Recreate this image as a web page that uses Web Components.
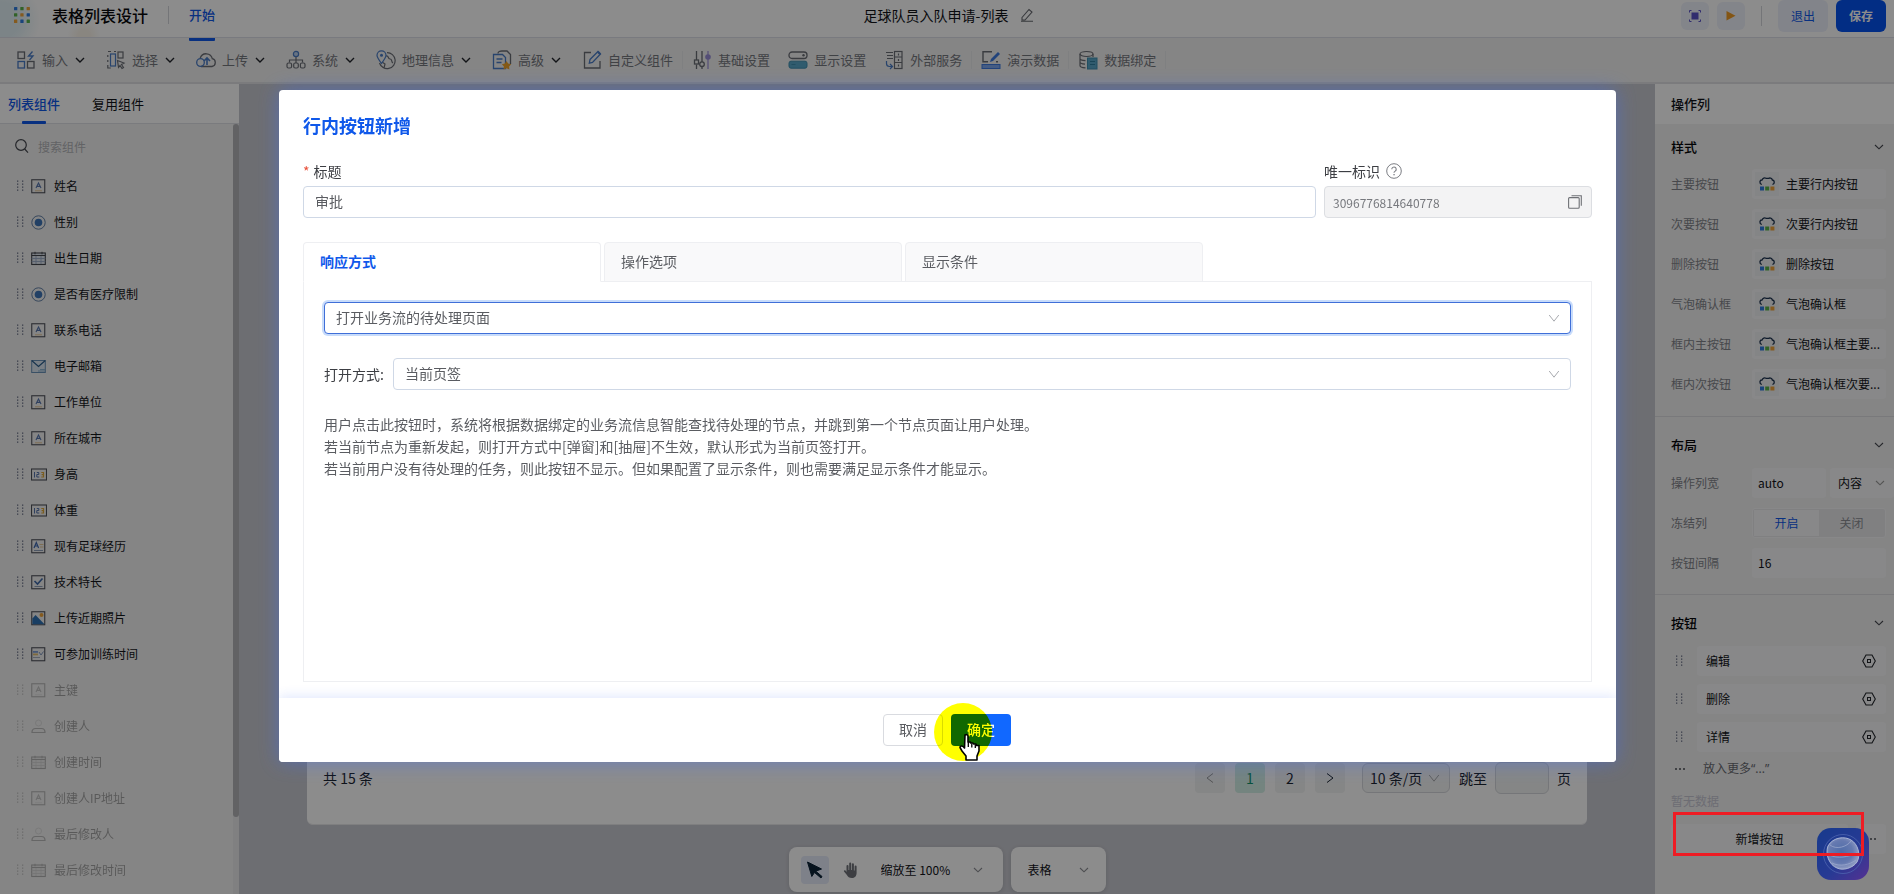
<!DOCTYPE html>
<html lang="zh-CN">
<head>
<meta charset="utf-8">
<meta name="viewport" content="width=device-width, initial-scale=1">
<title>表格列表设计</title>
<style>
  html, body { margin: 0; height: 100%; }
  body {
    font-family: "Noto Sans CJK SC", "Noto Sans", sans-serif;
    font-size: 12px; line-height: 20px; color: #111318; background: #c7c8cf; overflow: hidden;
    --blue: #0f58ea;
    --panel: #f2f2f2;
  }
</style>
</head>
<body>
<designer-app></designer-app>

<script>
/* ---------- shared ---------- */
const RESET = `
  *, *::before, *::after { box-sizing: border-box; }
  button, input, select { font: inherit; color: inherit; margin: 0; border: 0; padding: 0; background: none; outline: none; border-radius: 0; }
  select { appearance: none; }
  ul, h1, h2, h3, p { margin: 0; padding: 0; list-style: none; font: inherit; }
  a { color: inherit; text-decoration: none; }
`;
function define(name, css, html, setup) {
  customElements.define(name, class extends HTMLElement {
    connectedCallback() {
      if (this.shadowRoot) return;
      const root = this.attachShadow({ mode: 'open' });
      const t = document.createElement('template');
      t.innerHTML = `<style>${RESET}${css}</style>` + (typeof html === 'function' ? html(this) : html);
      root.append(t.content.cloneNode(true));
      if (setup) setup(this, root);
    }
  });
}

/* ---------- icons: [viewBox size w, h, markup] ---------- */
const K = '#6b6e76', B = '#4a7cc6', LB = '#58a6c8';
const boxed = inner => `<rect x=".75" y=".75" width="13" height="13" fill="none" stroke="#4f525a" stroke-width="1.1"/>${inner}`;
const ICONS = {
  chevron: [10, 10, `<path d="M1 3 5 6.800 9 3" fill="none" stroke="currentColor" stroke-width="1.100"/>`],
  chevronBold: [10, 10, `<path d="M1 3 5 7 9 3" fill="none" stroke="currentColor" stroke-width="1.400"/>`],
  chevronThin: [12, 12, `<path d="M1.2 3 6 9.2 10.8 3" fill="none" stroke="currentColor" stroke-width="1"/>`],
  left: [10, 12, `<path d="M8 1.5 2 6l6 4.500" fill="none" stroke="currentColor"/>`],
  right: [10, 12, `<path d="M2 1.500 8 6l-6 4.500" fill="none" stroke="currentColor"/>`],
  apps: [16, 16, [['#2f7de0','#59b34a','#f0a43a'],['#59b34a','#f0a43a','#2f7de0'],['#f0a43a','#2f7de0','#59b34a']].map((r, y) => r.map((c, x) => `<rect x="${x * 6.3}" y="${y * 6.3}" width="3.300" height="3.300" rx=".5" fill="${c}"/>`).join('')).join('')],
  pen: [14, 14, `<path d="M2 9.500 9 1.500l3 2.500-7 8H2z M1 13.200h12" fill="none" stroke="#666970" stroke-width="1.100"/>`],
  scan: [14, 14, `<g fill="#5a53c8"><rect x="3.500" y="3.500" width="7" height="7"/></g><path d="M1.500 3.500v-2h2M10.500 1.500h2v2M12.500 10.500v2h-2M3.500 12.500h-2v-2" fill="none" stroke="#5a53c8"/>`],
  play: [12, 12, `<path d="M1.500 1 10.500 5.700 1.500 10.500z" fill="#ee9b25"/>`],
  search: [14, 14, `<circle cx="6" cy="6" r="5.300" fill="none" stroke="#44474e" stroke-width="1.200"/><path d="M9.700 10 13 13.600" stroke="#44474e" stroke-width="1.200"/>`],
  input: [20, 20, `<g fill="none" stroke-width="1.300"><rect x="2" y="2" width="6.500" height="6.500" stroke="${K}"/><rect x="2" y="11.500" width="6.500" height="6.500" stroke="${B}"/><rect x="11.500" y="11.500" width="6.500" height="6.500" stroke="${K}"/><path d="M16.500 1.500 12.500 6h4.500l-3.500 4" stroke="${B}"/></g>`],
  choose: [20, 20, `<g fill="none" stroke="${K}" stroke-width="1.200"><path d="M2 1.500h3M1.800 5v2M1.800 10v2M1.800 15v3h3M8 1.500h2"/><rect x="4.500" y="4" width="5" height="12" stroke="${B}"/><rect x="12" y="2" width="5" height="6"/><path d="M11.500 10.500 18 13l-2.500 1.500 2 3-1.500 1-2-3-1.500 1.800z"/></g>`],
  upload: [20, 20, `<g fill="none" stroke-width="1.300"><path d="M5 16.500h11a4 4 0 0 0 .3-7.800A6.300 6.300 0 0 0 4.200 8" stroke="${K}"/><circle cx="4.500" cy="12.500" r="3.800" stroke="${B}"/><path d="M11 15V8.500M8 11l3-3 3 3" stroke="${B}" stroke-width="1.600"/></g>`],
  system: [20, 20, `<g fill="none" stroke="${K}" stroke-width="1.200"><circle cx="10" cy="4" r="2.600" stroke="${B}" fill="#bcd2ee"/><path d="M10 7v6M3.500 12.500V10h13v2.500"/><rect x="1" y="13" width="4.600" height="5" rx="1.500"/><rect x="7.700" y="13" width="4.600" height="5" rx="1.500"/><rect x="14.400" y="13" width="4.600" height="5" rx="1.500"/></g>`],
  geo: [20, 20, `<g fill="none" stroke="${K}" stroke-width="1.200"><path d="M11 2.600A8 8 0 1 1 3.500 13M10 6c3-1 1.500 3 4 3s1 3 3 4M6 12l3 2-1 4"/><path d="M5.500 13.500C2.500 9.500 1 7.500 1 5.300a4.500 4.500 0 0 1 9 0c0 2.200-1.500 4.200-4.500 8.200z" stroke="${B}"/><circle cx="5.500" cy="5.300" r="1.500" fill="${B}" stroke="none"/></g>`],
  advanced: [20, 20, `<g fill="none" stroke-width="1.300"><path d="M6 3.500C6 1.500 8 1 10 1h5l3.500 3.500V14" stroke="${K}"/><path d="M1.500 4.500h9l3 3v11h-12zM4.500 9h6M4.500 12.500h5" stroke="${B}"/></g><path d="m14.500 11 1.600 2.600 3 .6-2 2.200.3 3-2.900-1.200-2.900 1.200.3-3-2-2.200 3-.6z" fill="#f0a228"/>`],
  custom: [20, 20, `<g fill="none" stroke-width="1.300"><path d="M9 2.500H2.500V18H18v-7" stroke="${K}"/><path d="m8 9.500 8-8 2.500 2.500-8 8.500-3.200.7z" stroke="${B}"/><path d="m15 2.500 1.500-1.500L19 3.500 17.500 5z" fill="${B}"/></g>`],
  basic: [20, 20, `<g fill="none" stroke="${K}" stroke-width="1.300"><path d="M4.500 1v9M4.500 14.500V19M10 1v11M10 16.500V19"/><rect x="2.500" y="10" width="4" height="4"/><circle cx="10" cy="14.200" r="2.300"/></g><path d="M16 1v18" stroke="#9a8fd8" stroke-width="1.200"/><circle cx="16" cy="7" r="2.800" fill="#9a8fd8"/>`],
  display: [20, 20, `<rect x="1" y="2" width="18" height="6.500" rx="3" fill="none" stroke="${K}" stroke-width="1.300"/><circle cx="15.500" cy="5.200" r="1.200" fill="${K}"/><rect x="1" y="11.200" width="18" height="7" rx="2" fill="${LB}" stroke="#3f8fb0"/><path d="M3.500 14.500h4" stroke="#3f8fb0"/>`],
  service: [20, 20, `<g fill="none" stroke="${K}" stroke-width="1.200"><rect x="10.500" y="1.500" width="7.500" height="17"/><path d="M10.500 7h7.500M10.500 12.500h7.500M14.500 3.500v2M14.500 9v2M14.500 14.500v2M2 2.500h7M3 5.500h6M3 8.500h6"/><path d="M2.500 11v2.500a3 3 0 0 0 3 3H8M6 14l2.500 2.500L6 19" stroke="${B}"/></g>`],
  demo: [20, 20, `<g fill="none" stroke="${K}" stroke-width="1.400"><path d="M11 1.800H2v10h5M15 11.800h2"/></g><path d="m9 12 1-3 7-7 2 2-7 7z" fill="#3f7be0"/><rect x="1" y="14.500" width="18" height="4" fill="#7fa8ee" stroke="#3f7be0"/>`],
  bind: [20, 20, `<g fill="none" stroke="${K}" stroke-width="1.200"><ellipse cx="8.500" cy="4" rx="6.500" ry="2.500"/><path d="M2 4v11.500c0 1.200 2.500 2.200 5.500 2.400M2 8.500c0 1 2.500 2 5.500 2.200M2 12c0 1 2 1.900 5 2.100M15 4v3"/></g><rect x="9.500" y="8" width="9.500" height="11" fill="${LB}" stroke="#3f8fb0"/><path d="M12 11.500h5M12 14.500h5" stroke="#2f7f9f"/>`],
  grip: [8, 12, [0, 1].map(x => [0, 1, 2, 3].map(y => `<rect x="${x * 5 + 1}" y="${y * 3 + .5}" width="1.300" height="1.300" fill="#6a7088"/>`).join('')).join('')],
  text: [15, 15, boxed(`<path d="M5 9 7.500 4 10 9M5.900 7.400h3.200" fill="none" stroke="#5675ad" stroke-width="1.100"/><path d="M4 11.800h7" stroke="#e5c898"/>`)],
  radio: [15, 15, `<circle cx="7.500" cy="7.500" r="6.700" fill="none" stroke="#6482a8" stroke-width="1"/><circle cx="7.500" cy="7.500" r="3.800" fill="#3f76b8"/>`],
  date: [15, 15, `<rect x=".7" y="2" width="13.600" height="11.500" fill="#dfe5ee" stroke="#44474e" stroke-width="1.100"/><path d="M.7 7.500h13.600M.7 10.500h13.600M5 5v8M10 5v8" stroke="#9aaac4" stroke-width=".9"/><path d="M.7 4.500h13.600M4 .8v2.500M11 .8v2.500" stroke="#44474e"/>`],
  mail: [15, 15, `<rect x=".7" y="1.500" width="13.600" height="12" fill="#dce8f2" stroke="#6a92b8" stroke-width="1"/><path d="M.7 1.500 7.500 7.500 14.300 1.500" fill="none" stroke="#2d5f8e" stroke-width="1.200"/><path d="M9 10.500h5M7 12h7" stroke="#8fb4d2"/>`],
  number: [16, 15, `<rect x=".5" y="2" width="15" height="11" fill="none" stroke="#4f525a" stroke-width="1.100"/><path d="M3.500 5v5.500M5.800 5.500h2v2h-2v2.500h2.500" fill="none" stroke="#5675ad"/><path d="M10.300 5.500h2.200v4.500h-2.200M10.600 7.700h2" fill="none" stroke="#e0a93a" stroke-width="1.200"/>`],
  area: [15, 15, boxed(`<path d="M3 9 5.300 3.500 7.600 9M3.800 7h3" fill="none" stroke="#3f69b0" stroke-width="1.200"/><path d="M8.500 5.500h4M9 8h3.500" stroke="#e5c898"/><path d="M3 11.500h9" stroke="#8f9fb8"/>`)],
  check: [15, 15, boxed(`<path d="m3.500 6 3 3 5-5.500" fill="none" stroke="#3f69a8" stroke-width="1.600"/><path d="M3.500 11.500h8" stroke="#8f9fb8"/>`)],
  image: [15, 15, boxed(`<path d="M1.400 13.200V7.500L4.500 4l9 9.200z" fill="#2f72b4"/><circle cx="10.500" cy="4" r="2" fill="#f0a43a"/>`)],
  pick: [15, 15, boxed(`<rect x="2" y="4" width="5" height="1.800" fill="#7f9fd8"/><rect x="2" y="6.500" width="5" height="1.800" fill="#e5c070"/><path d="m8 5 2 3 2.500-3.500" fill="none" stroke="#7f97bd"/><path d="M2 10.500h7" stroke="#a8b0bc"/>`)],
  user: [15, 15, `<circle cx="7.500" cy="4" r="3" fill="none" stroke="#b8babe"/><path d="M1 13.500c0-2.500 1.500-4 3.500-4h6c2 0 3.500 1.500 3.500 4z" fill="none" stroke="#55585e" stroke-width="1.200"/>`],
  theme: [18, 16, `<path d="M3.800 8.500C1 7.500 1.500 4 4 4 5 2 6.500 1.500 8 2.300h2.500C12.500 1.500 14 2.500 14.300 4 16.800 4.200 17 7.500 14.500 8.500" fill="none" stroke="#1d3350" stroke-width="1.300"/><rect x="2" y="10.500" width="4" height="4" fill="#2f7de0"/><rect x="7.200" y="10.500" width="4" height="4" fill="#59b34a"/><rect x="12.400" y="10.500" width="4" height="4" fill="#f0a43a"/>`],
  hex: [14, 14, `<path d="M4 1h6l3.300 6L10 13H4L.7 7z" fill="none" stroke="#22252b" stroke-width="1.100"/><rect x="5.500" y="5.500" width="3" height="3" fill="none" stroke="#22252b"/>`],
  pointer: [18, 18, `<path d="M1.500 1 15.500 8 9.800 10.200 16 15.500 15 17 8.500 11.500 5.800 15.500z" fill="#0d2438" stroke="#0d2438"/>`],
  hand: [16, 18, `<path d="M3.500 11V5a1 1 0 0 1 2 0v4h.7V2.500a1 1 0 0 1 2 0V9h.7V3.200a1 1 0 0 1 2 0V9.500h.7V5.500a1 1 0 0 1 2 0V12c0 3-2 5-4.700 5s-4-1-5-3L1 10.500c-.5-1 .8-1.800 1.500-1z" fill="#6f7279"/>`],
  help: [16, 16, `<circle cx="8" cy="8" r="7.300" fill="none" stroke="#7b7d83"/><path d="M5.800 6.300a2.200 2.200 0 1 1 3.400 1.800c-.8.500-1.200.8-1.200 1.700" fill="none" stroke="#7b7d83" stroke-width="1.100"/><rect x="7.400" y="11" width="1.300" height="1.300" fill="#7b7d83"/>`],
  copy: [14, 14, `<rect x=".6" y="2.600" width="10.600" height="10.600" rx="1" fill="none" stroke="#6f7176" stroke-width="1.100"/><path d="M3.500.7h9.800v10" fill="none" stroke="#6f7176" stroke-width="1.100"/>`],
  more: [12, 12, `<path d="M1 6h2M5 6h2M9 6h2" stroke="#4c4f56" stroke-width="1.600"/>`],
  cursor: [22, 28, `<path d="M6 2c2-1 3 0 3 1.500V9h2.500v1H14l.5 1H17l.5 1.500H20V18l-2 5v4H7v-4l-4-5-2-3.500c0-2 3-2 4.500.5z" fill="#fff" stroke="#000" stroke-width="1.600" stroke-linejoin="round"/><path d="M9.300 9v5M12.800 10.500v4M16.300 11.500V15" stroke="#000" stroke-width="1.300"/>`]
};
customElements.define('ui-icon', class extends HTMLElement {
  connectedCallback() {
    if (this.shadowRoot) return;
    const [w, h, body] = ICONS[this.getAttribute('name')];
    this.attachShadow({ mode: 'open' }).innerHTML =
      `<style>:host{display:inline-flex;flex:none;width:${w}px;height:${h}px}svg{display:block}</style>
       <svg width="${w}" height="${h}" viewBox="0 0 ${w} ${h}" aria-hidden="true">${body}</svg>`;
  }
});

/* ---------- top bar ---------- */
define('top-bar', `
  :host { display: grid; grid-template-columns: 1fr auto 1fr; align-items: stretch; height: 38px; flex: none;
    background: radial-gradient(circle at 2px 20px, #e2f1f6 0 18px, transparent 38px), radial-gradient(circle at 84px 36px, #faf4ea 0 6px, transparent 16px), #fff;
    border-bottom: 1px solid #dcdfe8; }
  .side, .name { display: flex; align-items: center; padding-bottom: 11px; }
  .side { padding-left: 14px; position: relative; }
  h1 { font-size: 16px; font-weight: 500; line-height: 24px; margin-left: 22px; color: #08090c; }
  .rule { width: 1px; height: 18px; background: #d3d5da; margin: 0 20px; }
  nav { display: flex; align-self: stretch; margin-bottom: -11px; }
  nav a { display: flex; align-items: center; padding-bottom: 8px; font-size: 13px; font-weight: 500; color: var(--blue); border-bottom: 3px solid var(--blue); border-radius: 1px; }
  .name { font-size: 14px; gap: 12px; padding-left: 4px; }
  .name button { display: flex; }
  .end { justify-content: flex-end; padding: 0 8px 9px 0; }
  .end button { display: flex; align-items: center; justify-content: center; height: 28px; border-radius: 6px; background: #eff2fb; font-size: 12px; }
  .sq { width: 28px; margin-right: 8px; }
  .end .txt { width: 50px; height: 32px; color: var(--blue); background: #edf1fc; }
  .end .go { background: #0452f0; color: #fff; font-weight: 700; margin-left: 8px; }
  .end .rule { margin: 0 16px 0 8px; height: 20px; }
`, `
  <div class="side"><ui-icon name="apps"></ui-icon><h1>表格列表设计</h1><span class="rule"></span><nav><a href="#start">开始</a></nav></div>
  <div class="name"><span>足球队员入队申请-列表</span><button aria-label="重命名"><ui-icon name="pen"></ui-icon></button></div>
  <div class="side end"><button class="sq" aria-label="全屏"><ui-icon name="scan"></ui-icon></button><button class="sq" aria-label="预览"><ui-icon name="play"></ui-icon></button><span class="rule"></span><button class="txt">退出</button><button class="txt go">保存</button></div>
`);

/* ---------- tool bar ---------- */
define('tool-item', `
  :host { display: block; }
  button { display: flex; align-items: center; font-size: 13px; color: #76787f; }
  .label { margin-left: 6px; white-space: nowrap; }
  .arrow { margin-left: 7px; color: #22252b; }
`, el => `<button><ui-icon name="${el.getAttribute('icon')}"></ui-icon><span class="label"><slot></slot></span>${el.hasAttribute('menu') ? '<ui-icon class="arrow" name="chevronBold"></ui-icon>' : ''}</button>`);

define('tool-bar', `
  :host { display: flex; align-items: center; height: 46px; flex: none; padding-left: 16px; background: var(--panel); border-bottom: 2px solid #e0e1e4; }
  tool-item[menu] { margin-right: 21px; }
  tool-item:not([menu]) + tool-item { margin-left: 18px; }
  i { width: 1px; height: 18px; background: #e8e9eb; margin: 0 9px; }
`, `
  <tool-item icon="input" menu>输入</tool-item><tool-item icon="choose" menu>选择</tool-item><tool-item icon="upload" menu>上传</tool-item>
  <tool-item icon="system" menu>系统</tool-item><tool-item icon="geo" menu>地理信息</tool-item><tool-item icon="advanced" menu>高级</tool-item>
  <tool-item icon="custom">自定义组件</tool-item><i></i><tool-item icon="basic">基础设置</tool-item><tool-item icon="display">显示设置</tool-item>
  <tool-item icon="service">外部服务</tool-item><i></i><tool-item icon="demo">演示数据</tool-item><i></i><tool-item icon="bind">数据绑定</tool-item><i></i>
`);

/* ---------- component palette ---------- */
define('palette-item', `
  :host { display: flex; align-items: center; height: 36px; padding-left: 16px; color: #14161b; }
  :host([disabled]) { opacity: .36; filter: grayscale(1); }
  .type { display: flex; justify-content: center; width: 17px; margin: 0 7px 0 6px; }
`, el => `<ui-icon name="grip"></ui-icon><span class="type"><ui-icon name="${el.getAttribute('icon')}"></ui-icon></span><slot></slot>`);

const FIELDS = [['text','姓名'],['radio','性别'],['date','出生日期'],['radio','是否有医疗限制'],['text','联系电话'],['mail','电子邮箱'],['text','工作单位'],['text','所在城市'],['number','身高'],['number','体重'],['area','现有足球经历'],['check','技术特长'],['image','上传近期照片'],['pick','可参加训练时间'],['text','主键',1],['user','创建人',1],['date','创建时间',1],['text','创建人IP地址',1],['user','最后修改人',1],['date','最后修改时间',1]];
define('palette-panel', `
  :host { display: flex; flex-direction: column; width: 239px; flex: none; background: var(--panel); min-height: 0; }
  nav { display: flex; gap: 32px; height: 40px; flex: none; padding-left: 8px; background: #fff; border-bottom: 1px solid #dfe1e5; font-size: 13px; }
  nav a { display: flex; align-items: center; position: relative; }
  nav .on { color: var(--blue); font-weight: 500; }
  nav .on::after { content: ""; position: absolute; left: 14px; right: 14px; bottom: -1px; height: 3px; border-radius: 1px; background: var(--blue); }
  .body { display: flex; flex: 1; min-height: 0; overflow: hidden; }
  .list { flex: 1; min-width: 0; }
  .search { display: flex; align-items: center; gap: 9px; padding: 0 15px; height: 44px; }
  input { flex: 1; min-width: 0; height: 28px; }
  input::placeholder { color: #b2b4b8; opacity: 1; }
  .bar { width: 6px; background: #e9e9eb; }
  .bar i { display: block; height: 90%; background: #b2b3b7; border-radius: 3px; }
`, `
  <nav><a class="on" href="#list">列表组件</a><a href="#reuse">复用组件</a></nav>
  <div class="body"><div class="list"><div class="search"><ui-icon name="search"></ui-icon><input type="text" placeholder="搜索组件" aria-label="搜索组件"></div>
  ${FIELDS.map(([i, t, d]) => `<palette-item icon="${i}"${d ? ' disabled' : ''}>${t}</palette-item>`).join('')}</div><div class="bar"><i></i></div></div>
`);

/* ---------- canvas ---------- */
define('design-canvas', `
  :host { display: flex; flex-direction: column; flex: 1; min-width: 0; background: #c7c8cf; }
  .card { flex: 1; margin: 24px 68px 0; background: #fff; border-radius: 6px; display: flex; align-items: flex-end; padding: 0 16px 30px; font-size: 14px; border-bottom: 1px solid #e8e8ea; }
  .pager { display: flex; align-items: center; flex: 1; color: #1b2430; }
  .total { margin-right: auto; }
  .pager button { display: flex; align-items: center; justify-content: center; width: 30px; height: 30px; margin-right: 10px; border-radius: 4px; background: #f3f4f4; }
  .pager .on { background: #d4f0e7; color: #10936c; }
  .pager .off { color: #999; }
  .size { position: relative; margin: 0 9px 0 7px; }
  .size select { width: 88px; height: 30px; padding-left: 7px; border: 1px solid #d6d8dc; border-radius: 6px; background: #f5f6f6; }
  .size ui-icon { position: absolute; right: 10px; top: 9px; color: #aaa; pointer-events: none; }
  label { display: flex; align-items: center; gap: 8px; }
  label input { width: 54px; height: 32px; border: 1px solid #d6d8dc; border-radius: 6px; background: #f3f5f4; }
  .dock { display: flex; justify-content: center; gap: 8px; padding: 22px 0 2px; height: 69px; flex: none; }
  .dock > div { display: flex; align-items: center; background: #fff; border-radius: 8px; box-shadow: 0 1px 4px #0002; }
  .dock button { display: flex; align-items: center; justify-content: center; width: 28px; height: 28px; border-radius: 4px; }
  .dock .sel { background: #e6ebfa; margin: 0 8px 0 12px; }
  .drop { position: relative; display: flex; align-items: center; }
  .drop select { height: 28px; padding-right: 32px; }
  .drop ui-icon { position: absolute; right: 0; pointer-events: none; color: #8c8e94; }
  .zoom .drop { margin: 0 20px 0 16px; } .zoom select { width: 102px; }
  .view .drop { margin: 0 17px; } .view select { width: 61px; }
`, `
  <div class="card"><div class="pager"><span class="total">共 15 条</span>
    <button class="off" aria-label="上一页"><ui-icon name="left"></ui-icon></button><button class="on">1</button><button>2</button><button aria-label="下一页"><ui-icon name="right"></ui-icon></button>
    <span class="size"><select aria-label="每页条数"><option>10 条/页</option></select><ui-icon name="chevronThin"></ui-icon></span>
    <label>跳至<input type="text">页</label></div></div>
  <div class="dock"><div class="zoom"><button class="sel" aria-label="选择"><ui-icon name="pointer"></ui-icon></button><button aria-label="平移"><ui-icon name="hand"></ui-icon></button>
    <span class="drop"><select aria-label="缩放"><option>缩放至 100%</option></select><ui-icon name="chevron"></ui-icon></span></div>
    <div class="view"><span class="drop"><select aria-label="视图"><option>表格</option></select><ui-icon name="chevron"></ui-icon></span></div></div>
`);

/* ---------- property panel ---------- */
define('prop-section', `
  :host { display: block; padding: 5px 8px 16px 16px; border-top: 1px solid #dcdde0; }
  :host([first]) { padding-top: 0; padding-bottom: 17px; border-top: 0; }
  h3 { display: flex; align-items: center; justify-content: space-between; height: 46px; padding-right: 2px; font-size: 13px; font-weight: 500; color: #06070a; }
  :host([first]) h3 { height: 45px; }
  h3 ui-icon { color: #44474e; }
  .rows { display: flex; flex-direction: column; gap: 10px; }
  :host([tight]) .rows { gap: 8px; }
`, el => `<h3>${el.getAttribute('heading')}<ui-icon name="chevron"></ui-icon></h3><div class="rows"><slot></slot></div>`);

define('style-row', `
  :host { display: grid; grid-template-columns: 81px 1fr; align-items: center; height: 30px; }
  .label { color: #82848b; }
  button { display: flex; align-items: center; height: 30px; padding: 0 6px 0 3px; min-width: 0; background: #f8f8f9; border-radius: 3px; text-align: left; color: #14161b; }
  .ic { display: flex; align-items: center; justify-content: center; width: 24px; height: 24px; background: #f1f2f4; margin-right: 7px; }
  .val { white-space: nowrap; }
`, el => `<span class="label" id="l">${el.getAttribute('label')}</span><button aria-labelledby="l v"><span class="ic"><ui-icon name="theme"></ui-icon></span><span class="val" id="v"><slot></slot></span></button>`);

define('action-row', `
  :host { display: flex; align-items: center; height: 30px; padding-left: 4px; }
  .box { display: flex; align-items: center; justify-content: space-between; flex: 1; height: 30px; margin-left: 14px; padding: 0 10px 0 9px; background: #f8f8f9; border-radius: 3px; }
  button { display: flex; }
`, `<ui-icon name="grip"></ui-icon><span class="box"><slot></slot><button aria-label="设置"><ui-icon name="hex"></ui-icon></button></span>`);

const STYLES = [['主要按钮','主要行内按钮'],['次要按钮','次要行内按钮'],['删除按钮','删除按钮'],['气泡确认框','气泡确认框'],['框内主按钮','气泡确认框主要...'],['框内次按钮','气泡确认框次要...']];
define('prop-panel', `
  :host { display: flex; flex-direction: column; width: 239px; flex: none; background: var(--panel); overflow: hidden; }
  h2 { height: 40px; line-height: 40px; flex: none; padding-left: 16px; background: #fff; font-size: 13px; font-weight: 500; }
  .row { display: grid; grid-template-columns: 81px 1fr; align-items: center; height: 30px; }
  .row > label, .row > .lab { color: #82848b; }
  .row input[type=text], .row select { width: 100%; height: 30px; padding: 0 0 2px 6px; background: #f8f8f9; border-radius: 3px; }
  .pair { display: grid; grid-template-columns: 74px 64px; gap: 4px; width: 142px; }
  .pair span { position: relative; }
  .pair ui-icon { position: absolute; right: 9px; top: 10px; color: #999; pointer-events: none; }
  .row .pair select { padding: 0 0 0 8px; }
  .seg { display: grid; grid-template-columns: 1fr 1fr; height: 30px; padding: 1px; border: 1px solid #f8f8f9; border-radius: 3px; background: #eaeaec; }
  .seg label { display: flex; align-items: center; justify-content: center; color: #8c8e94; }
  .seg label:has(:checked) { background: #f8f8f9; color: var(--blue); }
  .seg input { appearance: none; position: absolute; opacity: 0; }
  .more { display: flex; align-items: center; gap: 20px; height: 34px; margin: -8px 0; color: #6a6c72; font-family: "Noto Sans", "Noto Sans CJK SC", sans-serif; }
  .more ui-icon { margin-left: 3px; margin-right: -3px; }
  .none { height: 30px; line-height: 30px; color: #c6c6d2; }
  .add { display: grid; grid-template-columns: 1fr 30px; gap: 8px; }
  .add button { display: flex; align-items: center; justify-content: center; height: 30px; background: #f8f8f9; border-radius: 3px; }
`, `
  <h2>操作列</h2>
  <prop-section heading="样式" first>${STYLES.map(([a, b]) => `<style-row label="${a}">${b}</style-row>`).join('')}</prop-section>
  <prop-section heading="布局">
    <div class="row"><label for="w">操作列宽</label><div class="pair"><input id="w" type="text" value="auto"><span><select aria-label="宽度依据"><option>内容</option></select><ui-icon name="chevron"></ui-icon></span></div></div>
    <div class="row"><span class="lab">冻结列</span><div class="seg"><label><input type="radio" name="f" checked>开启</label><label><input type="radio" name="f">关闭</label></div></div>
    <div class="row"><label for="g">按钮间隔</label><input id="g" type="text" value="16"></div>
  </prop-section>
  <prop-section heading="按钮" tight>
    <action-row>编辑</action-row><action-row>删除</action-row><action-row>详情</action-row>
    <div class="more"><ui-icon name="more"></ui-icon><span>放入更多“...”</span></div>
    <div class="none">暂无数据</div>
    <div class="add"><button>新增按钮</button><button aria-label="更多"><ui-icon name="more"></ui-icon></button></div>
  </prop-section>
`);

/* ---------- dialog ---------- */
define('button-dialog', `
  :host { display: flex; position: fixed; inset: 0; padding: 90px 278px 132px 279px; background: rgba(0,0,0,.45); }
  section { display: flex; flex-direction: column; flex: 1; min-width: 0; background: #fff; border-radius: 4px; isolation: isolate; font-size: 14px; color: #5a5c61; box-shadow: 0 0 20px rgba(66,110,240,.5); }
  .body { display: flex; flex-direction: column; flex: 1; min-height: 0; padding: 23px 24px 16px; }
  h2 { font-size: 18px; line-height: 24px; font-weight: 700; color: var(--blue); }
  .fields { display: grid; grid-template-columns: 1fr 268px; gap: 3px 8px; margin: 22px 0 24px; }
  .fields label, .cap { display: flex; align-items: center; height: 24px; color: #3c3e43; }
  .cap ui-icon { margin-left: 6px; }
  em { font-style: normal; color: #e8503a; margin-right: 4px; }
  input, select { width: 100%; height: 32px; padding: 0 0 2px 11px; border: 1px solid #cfd8e6; border-radius: 4px; background: #fff; }
  .id { position: relative; }
  .id input { background: #f3f3f4; border-color: #dcdee2; font-size: 12px; padding: 0 0 0 8px; color: #77797e; }
  .id button { position: absolute; right: 10px; top: 9px; display: flex; }
  .tabs { display: flex; gap: 3px; }
  .tabs button { width: 298px; height: 40px; padding: 0 0 2px 16px; text-align: left; background: #f9f9fa; border: 1px solid #eeeff2; border-radius: 4px 4px 0 0; }
  .tabs .on { background: #fff; border-bottom-color: #fff; color: var(--blue); font-weight: 700; position: relative; }
  .panel { flex: 1; margin-top: -1px; padding: 20px; border: 1px solid #eeeff2; }
  .pick { position: relative; flex: 1; }
  .pick ui-icon { position: absolute; right: 11px; top: 10px; color: #a9abb0; pointer-events: none; }
  .focus select { border-color: #3f6fd8; box-shadow: 0 0 0 2px #c8dcfb; }
  .line { display: flex; align-items: center; gap: 9px; margin: 24px 0 23px; }
  .line label { color: #3c3e43; }
  .desc { line-height: 22px; }
  footer { position: relative; display: flex; justify-content: center; gap: 8px; padding: 16px 17px 16px 16px; border-radius: 0 0 4px 4px; background: #fff; box-shadow: 0 -2px 12px rgba(40,90,240,.14); clip-path: inset(-16px 0 0 0); }
  footer > button { width: 60px; height: 32px; padding-bottom: 2px; border: 1px solid #d9dbe0; border-radius: 4px; background: #fff; }
  footer > .ok { border: 0; background: #1168ff; color: #fff; font-weight: 500; }
  .spot { position: absolute; left: calc(50% - 14px); top: 5px; width: 58px; height: 58px; border-radius: 50%; background: #ffff00; mix-blend-mode: multiply; pointer-events: none; }
  .hand { position: absolute; left: calc(50% + 11px); top: 35px; pointer-events: none; }
`, `
  <section role="dialog" aria-labelledby="t">
    <div class="body">
      <h2 id="t">行内按钮新增</h2>
      <div class="fields">
        <label for="title"><em>*</em>标题</label><div class="cap"><label for="uid">唯一标识</label><ui-icon name="help"></ui-icon></div>
        <input id="title" type="text" value="审批"><div class="id"><input id="uid" type="text" value="3096776814640778" readonly><button aria-label="复制"><ui-icon name="copy"></ui-icon></button></div>
      </div>
      <div class="tabs" role="tablist"><button class="on" role="tab">响应方式</button><button role="tab">操作选项</button><button role="tab">显示条件</button></div>
      <div class="panel">
        <div class="pick focus"><select aria-label="响应方式"><option>打开业务流的待处理页面</option></select><ui-icon name="chevronThin"></ui-icon></div>
        <div class="line"><label for="open">打开方式:</label><div class="pick"><select id="open"><option>当前页签</option></select><ui-icon name="chevronThin"></ui-icon></div></div>
        <p class="desc">用户点击此按钮时，系统将根据数据绑定的业务流信息智能查找待处理的节点，并跳到第一个节点页面让用户处理。<br>若当前节点为重新发起，则打开方式中[弹窗]和[抽屉]不生效，默认形式为当前页签打开。<br>若当前用户没有待处理的任务，则此按钮不显示。但如果配置了显示条件，则也需要满足显示条件才能显示。</p>
      </div>
    </div>
    <footer><button>取消</button><button class="ok">确定</button><span class="spot"></span><ui-icon class="hand" name="cursor"></ui-icon></footer>
  </section>
`);

/* ---------- floating assistant and highlight frame ---------- */
define('assistant-ball', `
  :host { display: block; position: fixed; right: 25px; bottom: 14px; width: 52px; height: 52px; }
  button { display: block; }
`, `
  <button aria-label="智能助手"><svg width="52" height="52" viewBox="0 0 52 52">
    <defs><linearGradient id="a" x1="0" y1="0" x2="1" y2="1"><stop offset="0" stop-color="#173a8c"/><stop offset=".55" stop-color="#263a94"/><stop offset="1" stop-color="#553192"/></linearGradient>
    <radialGradient id="b" cx=".45" cy=".45" r=".6"><stop offset="0" stop-color="#4f6ca8"/><stop offset=".6" stop-color="#6579b0"/><stop offset="1" stop-color="#98a3c6"/></radialGradient></defs>
    <rect width="52" height="52" rx="14" fill="url(#a)"/><circle cx="26" cy="26" r="19.500" fill="none" stroke="#4e65b0" stroke-width=".8"/>
    <path d="M11 18C16 9 28 8 34 12c7 4 10 15 6 22-4 6-14 9-20 6C12 37 8 26 11 18z" fill="url(#b)" stroke="#a9b4d6"/>
    <path d="M13 17c6 5 17 2 21-4M12 27c9 4 19 2 28-2M15 35c8 4 17 2 24-3" fill="none" stroke="#9fadd0" stroke-width="1" opacity=".7"/>
  </svg></button>
`);
define('focus-frame', `:host { display: block; position: fixed; right: 30px; bottom: 38px; width: 191px; height: 44px; border: 3px solid #ee1c24; box-sizing: border-box; pointer-events: none; }`, ``);

define('designer-app', `
  :host { display: flex; flex-direction: column; height: 100vh; }
  main { display: flex; flex: 1; min-height: 0; }
`, `
  <top-bar></top-bar><tool-bar></tool-bar>
  <main><palette-panel></palette-panel><design-canvas></design-canvas><prop-panel></prop-panel></main>
  <button-dialog></button-dialog><assistant-ball></assistant-ball><focus-frame></focus-frame>
`);
</script>
</body>
</html>
